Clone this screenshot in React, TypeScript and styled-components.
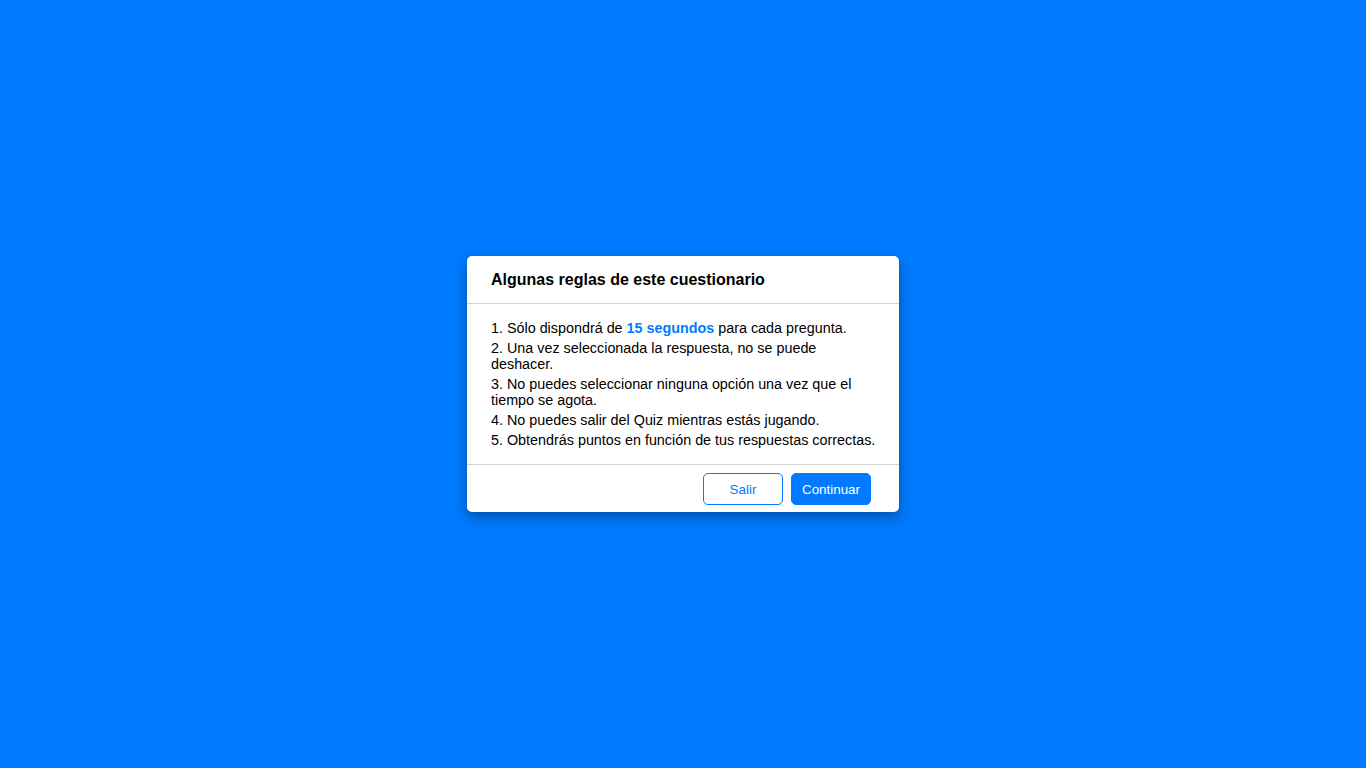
import React from "react";
import styled, { createGlobalStyle } from "styled-components";

const Global = createGlobalStyle`
  html, body { margin: 0; padding: 0; }
  body { background: #007bff; font-family: "Liberation Sans", Arial, sans-serif; }
  * { box-sizing: border-box; }
`;

const Page = styled.div`
  width: 100vw;
  height: 100vh;
  display: flex;
  align-items: center;
  justify-content: center;
`;

const Box = styled.div`
  width: 432px;
  background: #fff;
  border-radius: 5px;
  box-shadow: 0 4px 8px 0 rgba(0, 0, 0, 0.2), 0 6px 20px 0 rgba(0, 0, 0, 0.19);
`;

const Title = styled.div`
  height: 48px;
  padding: 0 24px;
  display: flex;
  align-items: center;
  border-bottom: 1px solid lightgrey;
  font-size: 16px;
  font-weight: 700;
  color: #000;
`;

const List = styled.div`
  padding: 16px 18px 16px 24px;
  border-bottom: 1px solid lightgrey;
  display: flex;
  flex-direction: column;
  gap: 4px;
`;

const Item = styled.div`
  font-size: 14.35px;
  line-height: 16px;
  color: #000;
`;

const Hl = styled.span`
  color: #007bff;
  font-weight: 700;
`;

const Buttons = styled.div`
  height: 47px;
  padding: 0 28px;
  display: flex;
  align-items: center;
  justify-content: flex-end;
  gap: 8px;
`;

const Btn = styled.button<{ $primary?: boolean }>`
  width: 80px;
  height: 32px;
  border-radius: 5px;
  border: 1px solid #007bff;
  background: ${(p) => (p.$primary ? "#007bff" : "#fff")};
  color: ${(p) => (p.$primary ? "#fff" : "#007bff")};
  font-family: "Liberation Sans", Arial, sans-serif;
  font-size: 13.4px;
  cursor: pointer;
  padding: 2px 0 0;
`;

export default function App() {
  return (
    <>
      <Global />
      <Page>
        <Box>
          <Title>Algunas reglas de este cuestionario</Title>
          <List>
            <Item>
              1. Sólo dispondrá de <Hl>15 segundos</Hl> para cada pregunta.
            </Item>
            <Item>2. Una vez seleccionada la respuesta, no se puede deshacer.</Item>
            <Item>3. No puedes seleccionar ninguna opción una vez que el tiempo se agota.</Item>
            <Item>4. No puedes salir del Quiz mientras estás jugando.</Item>
            <Item>5. Obtendrás puntos en función de tus respuestas correctas.</Item>
          </List>
          <Buttons>
            <Btn>Salir</Btn>
            <Btn $primary>Continuar</Btn>
          </Buttons>
        </Box>
      </Page>
    </>
  );
}
